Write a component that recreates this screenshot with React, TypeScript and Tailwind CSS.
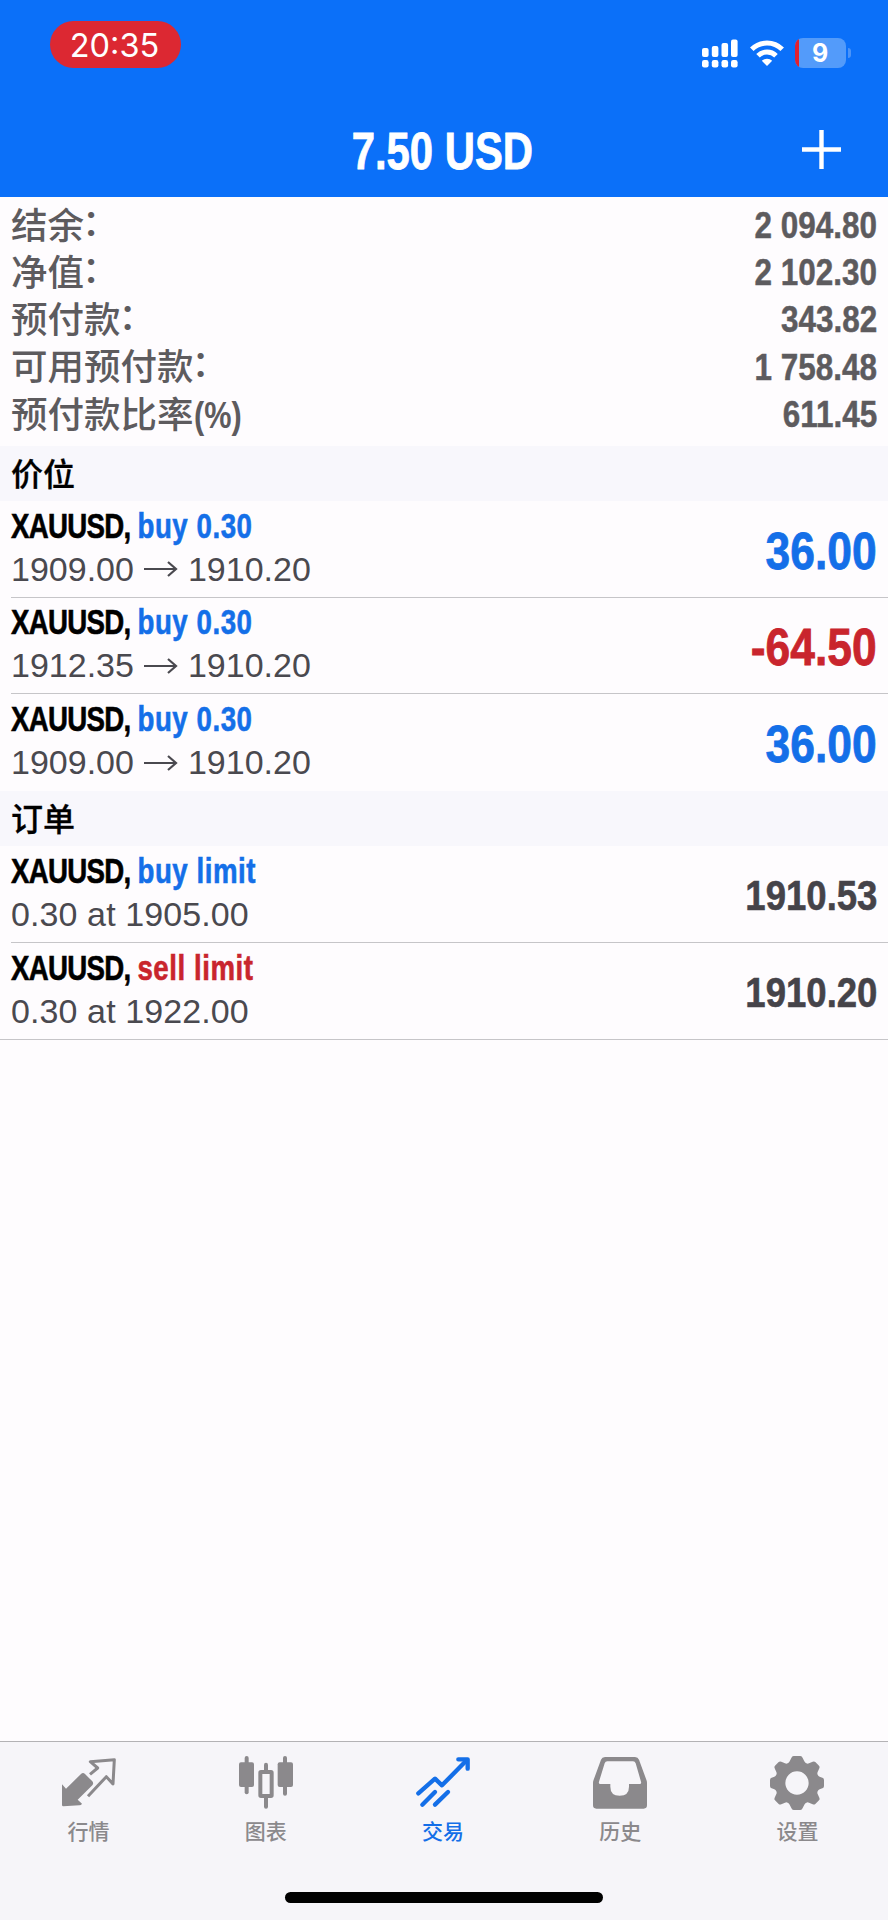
import React from "react";

const summary = [
  { label: "结余", suffix: "：", value: "2 094.80" },
  { label: "净值", suffix: "：", value: "2 102.30" },
  { label: "预付款", suffix: "：", value: "343.82" },
  { label: "可用预付款", suffix: "：", value: "1 758.48" },
  { label: "预付款比率", suffix: "(%)", value: "611.45" },
];

const positions = [
  { open: "1909.00", current: "1910.20", profit: "36.00" },
  { open: "1912.35", current: "1910.20", profit: "-64.50" },
  { open: "1909.00", current: "1910.20", profit: "36.00" },
];

const orders = [
  { type: "buy limit", color: "text-[#146fe8]", detail: "0.30 at 1905.00", price: "1910.53" },
  { type: "sell limit", color: "text-[#c9252d]", detail: "0.30 at 1922.00", price: "1910.20" },
];

function StatusBar() {
  return (
    <div className="flex justify-between pl-[50px] pr-[37px] h-[88px]">
      <div className="mt-[21px] flex h-[47px] w-[131px] items-center justify-center rounded-full bg-[#dc2832] pt-[3px] pr-[2px] font-[Inter,sans-serif] text-[32.5px] leading-none">
        20:35
      </div>
      <div className="mt-[38px] flex items-start">
        <svg className="mt-[1px] mr-[12px]" width="36" height="29" viewBox="0 0 36 29" fill="currentColor">
          <rect x="0" y="9" width="6.6" height="9" rx="2" />
          <rect x="9.8" y="7" width="6.6" height="11" rx="2" />
          <rect x="19.5" y="4" width="6.6" height="14" rx="2" />
          <rect x="29" y="0.5" width="6.6" height="17.5" rx="2" />
          <rect x="0" y="21" width="6.6" height="7.5" rx="2.2" />
          <rect x="9.8" y="21" width="6.6" height="7.5" rx="2.2" />
          <rect x="19.5" y="21" width="6.6" height="7.5" rx="2.2" />
          <rect x="29" y="21" width="6.6" height="7.5" rx="2.2" />
        </svg>
        <svg className="mt-[2px] mr-[11px]" width="34" height="26" viewBox="0 0 34 26" fill="none" stroke="currentColor" strokeWidth="5">
          <path d="M1.8 9.3a21.5 21.5 0 0 1 30.4 0" />
          <path d="M8 15.8a12.8 12.8 0 0 1 18 0" />
          <path d="M17 26l-5.2-5.2a7.4 7.4 0 0 1 10.4 0z" fill="currentColor" stroke="none" />
        </svg>
        <div className="flex items-center">
          <div className="flex h-[30px] w-[51px] overflow-hidden rounded-[8px] bg-[#539bfa]">
            <div className="w-[4px] bg-[#e0202f]" />
            <div className="flex flex-1 items-center justify-center pr-[5px] font-[Inter,sans-serif] text-[25px] font-bold leading-none">
              9
            </div>
          </div>
          <div className="ml-[2px] h-[10px] w-[3px] rounded-r-full bg-[#4c94f8]" />
        </div>
      </div>
    </div>
  );
}

function SectionTitle({ children }: { children: React.ReactNode }) {
  return (
    <h2 className="flex h-[55px] items-center bg-[#f8f7fc] pt-[2px] pl-[11px] text-[32px] font-medium leading-none text-black [-webkit-text-stroke:0.3px]">
      {children}
    </h2>
  );
}

function RowTitle({ type, color }: { type: string; color: string }) {
  return (
    <div className="origin-left scale-x-[0.79] whitespace-nowrap text-[35px] font-bold leading-[40px] [-webkit-text-stroke:0.6px]">
      <span className="tracking-[-0.9px] text-black">XAUUSD, </span>
      <span className={`tracking-[0.7px] ${color}`}>{type}</span>
    </div>
  );
}

function TabIcon({ name }: { name: string }) {
  return (
    <svg width="54" height="55" viewBox="0 0 162 165" fill="currentColor">
      {name === "quotes" && (
        <>
          <path d="M0 88l12 13 45-44q6-6 12 0l22 22q5 6 0 12l-44 43 13 12q-2 5-8 5l-48 3q-4 0-4-4z" />
          <path
            d="M84 58l23-19-22-19 72-6-4 73-20-22-55 59"
            fill="none"
            stroke="currentColor"
            strokeWidth="9"
            strokeLinejoin="round"
          />
        </>
      )}
      {name === "charts" && (
        <>
          <rect x="17" y="3" width="12" height="115" rx="6" />
          <rect x="0" y="22" width="45" height="74" rx="6" />
          <rect x="132" y="3" width="12" height="119" rx="6" />
          <rect x="116" y="22" width="46" height="74" rx="6" />
          <rect x="75" y="23" width="12" height="30" rx="6" />
          <rect x="75" y="120" width="12" height="41" rx="6" />
          <rect x="64" y="51" width="34" height="72" rx="2" fill="none" stroke="currentColor" strokeWidth="12" />
        </>
      )}
      {name === "trade" && (
        <g fill="none" stroke="currentColor" strokeWidth="13" strokeLinecap="round" strokeLinejoin="round">
          <path d="M7 115l50-44 21 20L152 16" />
          <path d="M127 13h28v28" />
          <path d="M19 149l38-38" />
          <path d="M57 149l39-38" />
        </g>
      )}
      {name === "history" && (
        <path
          fillRule="evenodd"
          d="M36 6h90q9 0 12 8l22 60q2 4 2 9v68q0 10-10 10H10q-10 0-10-10V83q0-5 2-9L24 14q3-8 12-8zM43 19q-6 0-8 6L18 80q-2 7 4 7h30v8q0 27 28 27t28-27v-8h32q6 0 4-7L128 25q-2-6-8-6z"
        />
      )}
      {name === "settings" && (
        <path
          fillRule="evenodd"
          d="M71 3h20q5 0 7 6l5 10q2 4 6 6t8 0l11-5q5-2 8 1l11 11q3 3 1 8l-5 11q-2 4 0 8t6 6l10 4q3 2 3 7v16q0 5-3 7l-10 4q-4 2-6 6t0 8l5 11q2 5-1 8l-11 11q-3 3-8 1l-11-5q-4-2-8 0t-6 6l-5 10q-2 6-7 6H71q-5 0-7-6l-5-10q-2-4-6-6t-8 0l-11 5q-5 2-8-1l-11-11q-3-3-1-8l5-11q2-4 0-8t-6-6l-10-4q-3-2-3-7V76q0-5 3-7l10-4q4-2 6-6t0-8l-5-11q-2-5 1-8l11-11q3-3 8-1l11 5q4 2 8 0t6-6l5-10q2-6 7-6zM81 49a35 35 0 1 0 0 70 35 35 0 1 0 0-70z"
        />
      )}
    </svg>
  );
}

const tabs = [
  { icon: "quotes", label: "行情" },
  { icon: "charts", label: "图表" },
  { icon: "trade", label: "交易", active: true },
  { icon: "history", label: "历史" },
  { icon: "settings", label: "设置" },
];

export default function App() {
  return (
    <div className="flex h-[1920px] w-[888px] flex-col overflow-hidden bg-[#fefcfe] font-['Liberation_Sans','Noto_Sans_CJK_SC',sans-serif]">
      {/* Header */}
      <header className="h-[197px] shrink-0 bg-[#0b70f9] text-white">
        <StatusBar />
        <div className="grid grid-cols-3 items-center pt-[33px]">
          <h1 className="col-start-2 scale-x-[0.82] whitespace-nowrap pr-[4px] text-center text-[51px] font-bold leading-[62px] [-webkit-text-stroke:0.8px]">
            7.50 USD
          </h1>
          <button className="mr-[47px] mb-[6px] justify-self-end">
            <svg width="39" height="39" viewBox="0 0 39 39" stroke="currentColor" strokeWidth="4.4">
              <path d="M19.5 0v39M0 19.5h39" />
            </svg>
          </button>
        </div>
      </header>

      {/* Account summary */}
      <section className="h-[249px] shrink-0 px-[11px] pt-[5px] text-[#5d5b5e]">
        {summary.map((item) => (
          <div key={item.label} className="flex h-[47.2px] items-center justify-between leading-none">
            <span className="flex items-center pt-[3px] text-[36.5px] font-medium">
              {item.label}
              {item.suffix === "：" ? (
                <span className="-ml-[2px] mb-[6px]">{item.suffix}</span>
              ) : (
                <span className="origin-left scale-x-[0.84] font-bold">{item.suffix}</span>
              )}
            </span>
            <span className="origin-right scale-x-[0.85] text-[37px] font-bold [-webkit-text-stroke:0.5px]">{item.value}</span>
          </div>
        ))}
      </section>

      {/* Open positions */}
      <SectionTitle>价位</SectionTitle>
      <ul className="h-[290px] shrink-0 pl-[11px]">
        {positions.map((item, i) => (
          <li
            key={i}
            className="flex h-[96.5px] items-center justify-between border-b border-[#c6c5c8] pr-[11px] last:border-0"
          >
            <div>
              <RowTitle type="buy 0.30" color="text-[#146fe8]" />
              <div className="flex items-center pt-px text-[34px] leading-[45px] text-[#4a494f]">
                {item.open}
                <svg className="mr-[10px] ml-[10px]" width="34" height="16" viewBox="0 0 34 16" fill="none" stroke="currentColor" strokeWidth="2.2">
                  <path d="M0 8h32M24 1l8 7-8 7" />
                </svg>
                {item.current}
              </div>
            </div>
            <span
              className={`origin-right scale-x-[0.87] pt-[6px] text-[51px] font-bold [-webkit-text-stroke:0.8px] ${
                item.profit.startsWith("-") ? "text-[#c9252d]" : "text-[#146fe8]"
              }`}
            >
              {item.profit}
            </span>
          </li>
        ))}
      </ul>

      {/* Pending orders */}
      <SectionTitle>订单</SectionTitle>
      <ul className="shrink-0 border-b border-[#c6c5c8]">
        {orders.map((item) => (
          <li key={item.type} className="group pl-[11px]">
            <div className="flex h-[96.5px] items-center justify-between border-b border-[#c6c5c8] pr-[11px] group-last:border-0">
              <div>
                <RowTitle type={item.type} color={item.color} />
                <div className="pt-px text-[34px] leading-[45px] tracking-[0.1px] text-[#4a494f]">{item.detail}</div>
              </div>
              <span className="origin-right scale-x-[0.85] pt-[2px] text-[43px] font-bold text-[#454349] [-webkit-text-stroke:0.6px]">
                {item.price}
              </span>
            </div>
          </li>
        ))}
      </ul>

      {/* Tab bar */}
      <nav className="mt-auto flex h-[179px] shrink-0 flex-col items-center justify-between border-t border-[#b3b2b5] bg-[#f6f5f9] pb-[17px]">
        <div className="grid w-full grid-cols-5 pt-[13px] pr-[2px]">
          {tabs.map((tab) => (
            <div
              key={tab.icon}
              className={`flex flex-col items-center ${tab.active ? "text-[#146fe8]" : "text-[#8b898c]"}`}
            >
              <TabIcon name={tab.icon} />
              <span className="mt-[7px] text-[21px] font-medium leading-[30px]">{tab.label}</span>
            </div>
          ))}
        </div>
        <div className="h-[11px] w-[318px] rounded-full bg-black" />
      </nav>
    </div>
  );
}
